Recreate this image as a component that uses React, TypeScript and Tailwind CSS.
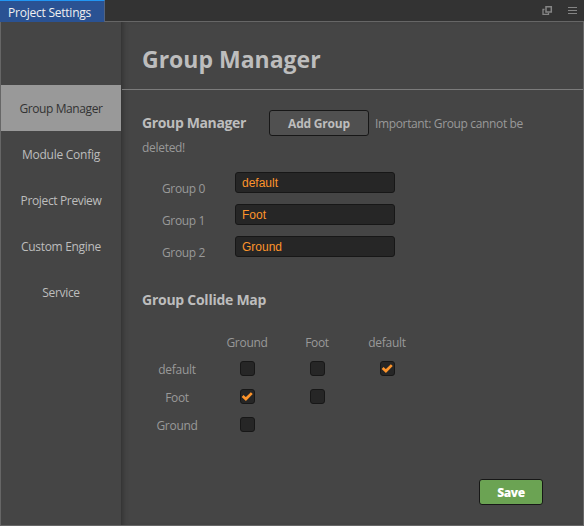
import React from "react";

const menu = [
  { label: "Group Manager", tracking: "tracking-[-0.4px]" },
  { label: "Module Config", tracking: "tracking-[-0.25px]" },
  { label: "Project Preview", tracking: "tracking-[-0.36px]" },
  { label: "Custom Engine", tracking: "tracking-[-0.3px]" },
  { label: "Service", tracking: "tracking-[-0.3px]" },
];

const groups = ["default", "Foot", "Ground"];

const columns = ["Ground", "Foot", "default"];

const collideRows = [
  { name: "default", cells: [false, false, true] },
  { name: "Foot", cells: [true, false] },
  { name: "Ground", cells: [false] },
];

function Checkbox({ checked }: { checked: boolean }) {
  return (
    <span className="flex h-[15px] w-[15px] items-center justify-center rounded-[3px] border border-[#171717] bg-[#262626]">
      {checked && (
        <svg width="13" height="13" viewBox="0 0 13 13" className="shrink-0">
          <path d="M1.6 5.9 L4.9 9 L10.8 3.1" fill="none" stroke="#fd942b" strokeWidth="2.7" />
        </svg>
      )}
    </span>
  );
}

function TitleBar() {
  return (
    <header className="flex h-[22px] shrink-0 border-b border-[#666] bg-[#333]">
      <div className="h-[22px] w-[105px] border-t border-r border-t-[#2196f3] border-r-[#53637e] bg-[#2a5293] pl-2 text-[12px] leading-[24px] tracking-[-0.23px] whitespace-nowrap text-[#f0f0f0]">
        Project Settings
      </div>
      <div className="ml-auto flex h-[21px] items-center gap-[14px] pr-[6px]">
        <svg width="11" height="11" viewBox="0 0 11 11" fill="none" stroke="#858585">
          <path d="M4 1.7h5.3v5.3h-5.3z" strokeWidth="1.5" />
          <path d="M2.5 4.5h-1.5v4.8h5.5v-1.5" strokeWidth="1.3" />
        </svg>
        <svg width="11" height="11" viewBox="0 0 11 11" stroke="#858585">
          <path d="M1 2.5h9M1 5.5h9M1 8.5h9" strokeWidth="1.15" />
        </svg>
      </div>
    </header>
  );
}

export default function App() {
  return (
    <div className="flex h-[526px] w-[584px] flex-col overflow-hidden bg-[#454545] font-['Open_Sans','Noto_Sans',sans-serif] text-[12px] text-[#999]">
      <TitleBar />
      <div className="flex min-h-0 flex-1 border-r border-b border-l border-[#666]">
        <nav className="w-[120px] shrink-0 pt-[63px]">
          {menu.map((item, i) => (
            <div
              key={item.label}
              className={`flex h-[46px] items-center justify-center pt-[2px] whitespace-nowrap ${item.tracking} ${
                i === 0 ? "bg-[#999] text-[#333]" : "text-[#bdbdbd]"
              }`}
            >
              {item.label}
            </div>
          ))}
        </nav>
        <main className="flex min-w-0 flex-1 flex-col border-l border-[#363636] shadow-[inset_4px_0_5px_-3px_#333]">
          <h1 className="h-[68px] shrink-0 border-b border-[#7b7b7b] pl-[20px] text-[23px] leading-[75px] font-bold whitespace-nowrap text-[#bdbdbd]">
            Group Manager
          </h1>
          <section className="pt-[20px] pl-[20px]">
            <div className="flex h-[26px] items-center whitespace-nowrap">
              <h2 className="w-[127px] pb-px text-[14px] font-bold tracking-[-0.37px] text-[#bdbdbd]">Group Manager</h2>
              <button className="h-[26px] w-[100px] rounded-[3px] border border-[#171717] bg-[#505050] pt-[2px] text-[12px] font-bold tracking-[-0.2px] text-[#bdbdbd]">
                Add Group
              </button>
              <span className="ml-[6px] pt-[2px] tracking-[-0.36px]">Important: Group cannot be</span>
            </div>
            <p className="h-[20px] leading-[24px] tracking-[-0.3px]">deleted!</p>
            <div className="mt-[16px] flex flex-col gap-[11px] pl-[20px]">
              {groups.map((name, i) => (
                <label key={name} className="flex h-[21px]">
                  <span className="w-[73px] pt-[6px] leading-[21px] tracking-[-0.35px] whitespace-nowrap">
                    Group {i}
                  </span>
                  <input
                    defaultValue={name}
                    className="h-[21px] w-[160px] rounded-[3px] border border-[#171717] bg-[#262626] px-[6px] font-['Liberation_Sans',Arial,sans-serif] text-[12px] text-[#fd942b]"
                  />
                </label>
              ))}
            </div>
          </section>
          <section className="pt-[33px] pl-[20px]">
            <h2 className="text-[14px] leading-[20px] font-bold tracking-[-0.26px] whitespace-nowrap text-[#bdbdbd]">
              Group Collide Map
            </h2>
            <div className="mt-[22px] ml-[70px] flex h-[20px] items-center pt-px">
              {columns.map((name) => (
                <span key={name} className="w-[70px] text-center tracking-[-0.3px]">
                  {name}
                </span>
              ))}
            </div>
            <div className="mt-[3px]">
              {collideRows.map((row) => (
                <div key={row.name} className="flex h-[28px] items-center">
                  <span className="w-[70px] pt-[2px] text-center tracking-[-0.3px]">{row.name}</span>
                  {row.cells.map((checked, i) => (
                    <span key={i} className="flex w-[70px] justify-center pb-px">
                      <Checkbox checked={checked} />
                    </span>
                  ))}
                </div>
              ))}
            </div>
          </section>
          <button className="mt-auto mr-[40px] mb-[20px] h-[26px] w-[64px] self-end rounded-[3px] border border-[#171717] bg-[#6ba353] pt-[2px] text-[12px] font-extrabold tracking-[-0.4px] text-white">
            Save
          </button>
        </main>
      </div>
    </div>
  );
}
